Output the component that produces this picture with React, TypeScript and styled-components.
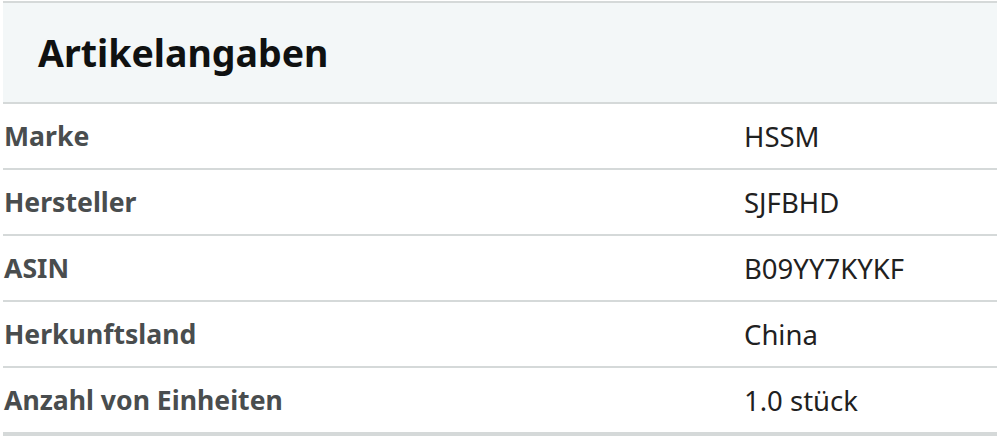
import React from "react";
import styled, { createGlobalStyle } from "styled-components";

const GlobalStyle = createGlobalStyle`
  * {
    box-sizing: border-box;
  }

  body {
    margin: 0;
    background: #ffffff;
    font-family: "Noto Sans", "Open Sans", Arial, sans-serif;
  }
`;

const Section = styled.section`
  margin: 1px 1px 0 3px;
  border-top: 2px solid #d5d9d9;
  border-bottom: 4px solid #d5d9d9;
`;

const Header = styled.header`
  height: 101px;
  display: flex;
  align-items: center;
  padding-left: 35px;
  background: #f3f7f8;
  border-bottom: 2px solid #d5d9d9;

  h2 {
    margin: 0;
    font-size: 37.5px;
    font-weight: 700;
    color: #0f1111;
  }
`;

const Row = styled.div`
  box-sizing: content-box;
  height: 64px;
  display: grid;
  grid-template-columns: 741px 1fr;
  align-items: center;

  & + & {
    border-top: 2px solid #d5d9d9;
  }
`;

const Label = styled.span`
  padding-left: 1px;
  font-size: 26.6px;
  font-weight: 700;
  color: #494d4e;
`;

const Value = styled.span`
  font-size: 27.5px;
  color: #1f2121;
`;

type Detail = {
  label: string;
  value: string;
};

const details: Detail[] = [
  { label: "Marke", value: "HSSM" },
  { label: "Hersteller", value: "SJFBHD" },
  { label: "ASIN", value: "B09YY7KYKF" },
  { label: "Herkunftsland", value: "China" },
  { label: "Anzahl von Einheiten", value: "1.0 stück" },
];

const App: React.FC = () => {
  return (
    <>
      <GlobalStyle />
      <Section>
        <Header>
          <h2>Artikelangaben</h2>
        </Header>
        {details.map(({ label, value }) => (
          <Row key={label}>
            <Label>{label}</Label>
            <Value>{value}</Value>
          </Row>
        ))}
      </Section>
    </>
  );
};

export default App;
